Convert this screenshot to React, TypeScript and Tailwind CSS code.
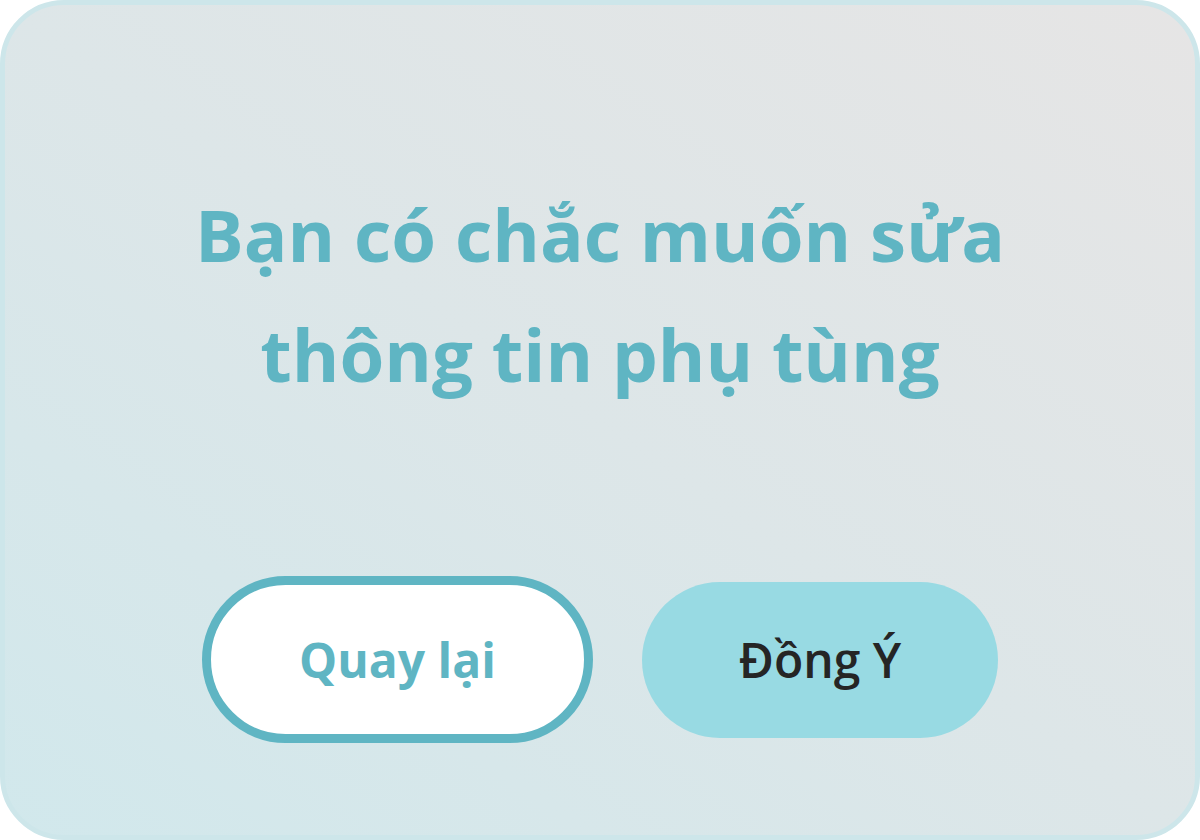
import React from 'react';

const font = { fontFamily: '"Open Sans", "Noto Sans", sans-serif' };

const ConfirmEditDialog: React.FC = () => {
  const handleBack = () => {};
  const handleConfirm = () => {};

  return (
    <div className="w-[1200px] h-[840px] bg-white" style={font}>
      {/* Card */}
      <div className="w-full h-full rounded-[64px] border-[5px] border-[#cde6ea] bg-gradient-to-tr from-[#d1e8ec] via-[#dde6e8] to-[#e6e5e5] flex flex-col items-center pt-[169px]">
        <h1 className="text-[72.5px] leading-[120px] font-bold text-[#5fb5c3] text-center">
          Bạn có chắc muốn sửa
          <br />
          thông tin phụ tùng
        </h1>

        {/* Actions */}
        <div className="mt-[162px] flex items-center gap-[49px]">
          <button
            onClick={handleBack}
            className="w-[391px] h-[167px] rounded-full border-[9px] border-[#5fb5c3] bg-white text-[48px] font-bold text-[#5fb5c3]"
          >
            Quay lại
          </button>
          <button
            onClick={handleConfirm}
            className="w-[356px] h-[156px] rounded-full bg-[#98dae3] text-[48px] font-semibold text-[#252525]"
          >
            Đồng Ý
          </button>
        </div>
      </div>
    </div>
  );
};

export default ConfirmEditDialog;
